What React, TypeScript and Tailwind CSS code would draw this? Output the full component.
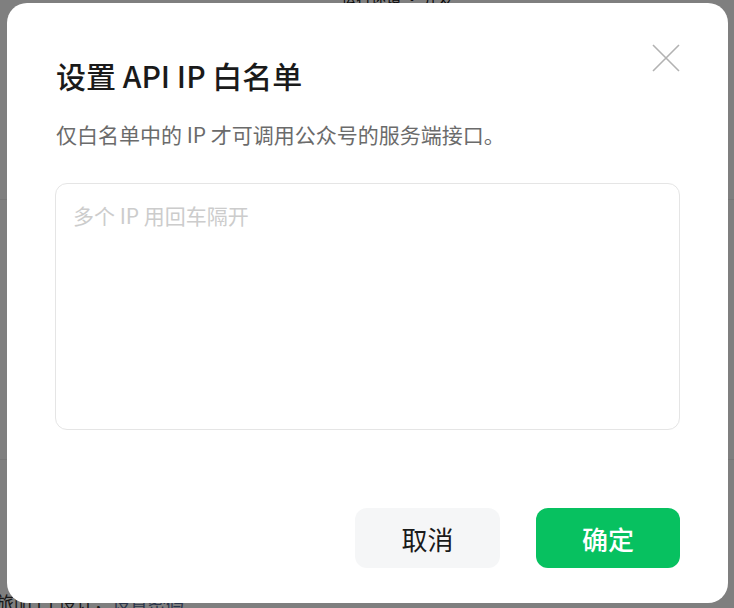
import React from "react";

export default function App() {
  return (
    <div
      className="relative w-[734px] h-[608px] overflow-hidden bg-white"
      style={{ fontFamily: '"Noto Sans CJK SC", "Noto Sans", sans-serif' }}
    >
      {/* background page */}
      <div className="flex flex-col h-full">
        <div className="h-[200px] border-b border-[#eeeeee] flex justify-center">
          <span className="ml-[60px] -mt-[12px] text-[15px] text-[#111]">运行环境 · 开发</span>
        </div>
        <div className="h-[260px] border-b border-[#eeeeee]" />
        <div className="flex-1 flex items-end">
          <span className="-mb-[8px] -ml-[4px] text-[18px] text-[#333]">
            旅吅 口 设计，<span className="text-[#576b95]">设置密码</span>
          </span>
        </div>
      </div>

      {/* overlay */}
      <div className="absolute inset-0 bg-black/50 pl-[7px] pt-[3px]">
        <div className="relative w-[721px] h-[600px] bg-white rounded-[20px] px-12 pt-[52px] pb-[35px] flex flex-col">
          <button className="absolute right-[47px] top-[40px] w-[30px] h-[30px] flex items-center justify-center">
            <svg width="30" height="30" viewBox="0 0 30 30" fill="none">
              <path d="M2 2 L28 28 M28 2 L2 28" stroke="#b2b2b2" strokeWidth="1.6" />
            </svg>
          </button>
          <h1 className="text-[30px] leading-[40px] font-medium text-[#1a1a1a] pl-[1px]">
            设置 API IP 白名单
          </h1>
          <p className="mt-[26px] text-[21px] leading-[26px] text-[#6b6b6b] pl-[1px]">
            仅白名单中的 IP 才可调用公众号的服务端接口。
          </p>
          <div className="mt-[36px] h-[247px] border border-[#e5e5e5] rounded-[12px] px-[17px] pt-[17px]">
            <span className="text-[21px] leading-[28px] text-[#cccccc]">多个 IP 用回车隔开</span>
          </div>
          <div className="mt-auto flex justify-end gap-[36px]">
            <button className="w-[145px] h-[60px] rounded-[12px] bg-[#f5f6f7] text-[26px] text-[#1a1a1a]">
              取消
            </button>
            <button className="w-[144px] h-[60px] rounded-[12px] bg-[#07c160] text-[26px] font-medium text-white">
              确定
            </button>
          </div>
        </div>
      </div>
    </div>
  );
}
